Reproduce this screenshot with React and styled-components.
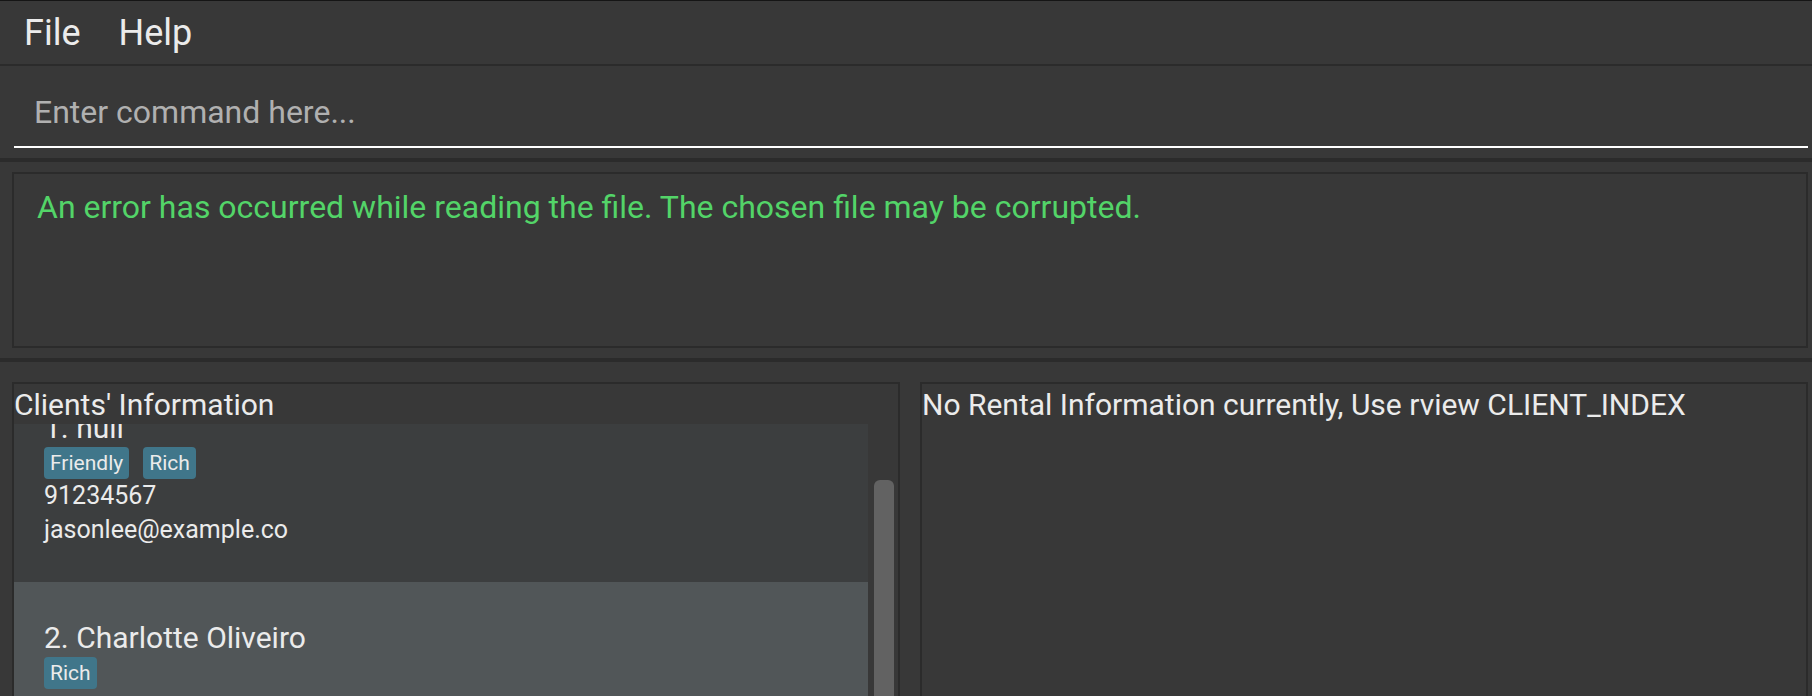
import React, { useLayoutEffect, useRef } from "react";
import styled, { createGlobalStyle, ThemeProvider } from "styled-components";

const theme = {
  window: "#383838",
  line: "#2b2b2b",
  text: "#ebebeb",
  muted: "#b0b0b0",
  success: "#53d468",
  rowOdd: "#3c3e3f",
  rowEven: "#515658",
  tag: "#40768a",
  thumb: "#626262",
  size: { menu: "36px", field: "32px", title: "30px", body: "25px", tag: "21px" },
};

const GlobalStyle = createGlobalStyle`
  *, *::before, *::after { box-sizing: border-box; }
  body {
    margin: 0;
    background: ${theme.window};
    color: ${theme.text};
    font-family: Roboto, "Liberation Sans", sans-serif;
  }
  button, input { font-family: inherit; }
  h2, h3, p, ul, ol { margin: 0; padding: 0; font-weight: 400; list-style: none; }
`;

const Window = styled.div`
  display: flex;
  flex-direction: column;
  height: 100vh;
  overflow: hidden;
`;

const MenuBar = styled.nav`
  display: flex;
  align-items: center;
  gap: 38px;
  min-height: 66px;
  padding: 0 24px;
  border-top: 1px solid #151515;
  border-bottom: 2px solid ${({ theme }) => theme.line};
`;

const MenuButton = styled.button`
  padding: 0;
  border: 0;
  background: none;
  color: inherit;
  font-size: ${({ theme }) => theme.size.menu};
  line-height: 40px;
`;

const CommandBar = styled.form`
  padding: 14px 4px 10px 14px;
  border-bottom: 4px solid ${({ theme }) => theme.line};
`;

const CommandInput = styled.input`
  display: block;
  width: 100%;
  height: 68px;
  padding: 0 20px 2px;
  border: 0;
  border-bottom: 2px solid #fff;
  outline: 0;
  background: none;
  color: ${({ theme }) => theme.text};
  font-size: ${({ theme }) => theme.size.field};
  &::placeholder { color: ${({ theme }) => theme.muted}; opacity: 1; }
`;

const ResultArea = styled.section`
  padding: 10px 4px 10px 12px;
  border-bottom: 4px solid ${({ theme }) => theme.line};
`;

const Result = styled.output`
  display: block;
  min-height: 176px;
  padding: 12px 23px;
  border: 2px solid ${({ theme }) => theme.line};
  color: ${({ theme }) => theme.success};
  font-size: ${({ theme }) => theme.size.field};
  line-height: 42px;
`;

const Panels = styled.main`
  display: grid;
  grid-template-columns: 1fr 1fr;
  gap: 20px;
  flex: 1;
  min-height: 0;
  padding: 20px 4px 0 12px;
`;

const Panel = styled.section`
  display: flex;
  flex-direction: column;
  min-width: 0;
  min-height: 0;
  border: 2px solid ${({ theme }) => theme.line};
  border-bottom: 0;
`;

const PanelTitle = styled.h2`
  padding: 3px 0 1px;
  font-size: ${({ theme }) => theme.size.title};
  line-height: 36px;
`;

const ListView = styled.div`
  display: flex;
  flex: 1;
  min-height: 0;
`;

const ClientList = styled.ol`
  flex: 1;
  overflow-y: auto;
  scrollbar-width: none;
`;

const ScrollTrack = styled.div`
  display: flex;
  width: 30px;
  padding: 56px 4px 0 6px;
`;

const ScrollThumb = styled.div`
  flex: 1;
  border-radius: 6px 6px 0 0;
  background: ${({ theme }) => theme.thumb};
`;

const ClientCard = styled.li`
  min-height: 210px;
  padding: 38px 30px 35px;
  background: ${({ theme, $even }) => ($even ? theme.rowEven : theme.rowOdd)};
`;

const ClientName = styled.h3`
  padding-bottom: 1px;
  font-size: ${({ theme }) => theme.size.title};
  line-height: 36px;
`;

const TagList = styled.ul`
  display: flex;
  gap: 14px;
`;

const Tag = styled.li`
  padding: 0 6px;
  border-radius: 4px;
  background: ${({ theme }) => theme.tag};
  font-size: ${({ theme }) => theme.size.tag};
  line-height: 32px;
`;

const Detail = styled.p`
  font-size: ${({ theme }) => theme.size.body};
  line-height: 34px;
`;

const clients = [
  { name: "null", tags: ["Friendly", "Rich"], details: ["91234567", "jasonlee@example.co"] },
  { name: "Charlotte Oliveiro", tags: ["Rich"], details: [] },
];

const INITIAL_SCROLL = 52;

export default function App() {
  const list = useRef(null);

  useLayoutEffect(() => {
    list.current.scrollTop = INITIAL_SCROLL;
  }, []);

  return (
    <ThemeProvider theme={theme}>
      <GlobalStyle />
      <Window>
        <MenuBar>
          <MenuButton type="button">File</MenuButton>
          <MenuButton type="button">Help</MenuButton>
        </MenuBar>
        <CommandBar onSubmit={(event) => event.preventDefault()}>
          <CommandInput type="text" aria-label="Command" placeholder="Enter command here..." />
        </CommandBar>
        <ResultArea>
          <Result>An error has occurred while reading the file. The chosen file may be corrupted.</Result>
        </ResultArea>
        <Panels>
          <Panel>
            <PanelTitle>Clients' Information</PanelTitle>
            <ListView>
              <ClientList ref={list}>
                {clients.map((client, index) => (
                  <ClientCard key={client.name} $even={index % 2 === 1}>
                    <ClientName>{`${index + 1}. ${client.name}`}</ClientName>
                    <TagList>
                      {client.tags.map((tag) => (
                        <Tag key={tag}>{tag}</Tag>
                      ))}
                    </TagList>
                    {client.details.map((detail) => (
                      <Detail key={detail}>{detail}</Detail>
                    ))}
                  </ClientCard>
                ))}
              </ClientList>
              <ScrollTrack>
                <ScrollThumb />
              </ScrollTrack>
            </ListView>
          </Panel>
          <Panel>
            <PanelTitle>No Rental Information currently, Use rview CLIENT_INDEX</PanelTitle>
          </Panel>
        </Panels>
      </Window>
    </ThemeProvider>
  );
}
